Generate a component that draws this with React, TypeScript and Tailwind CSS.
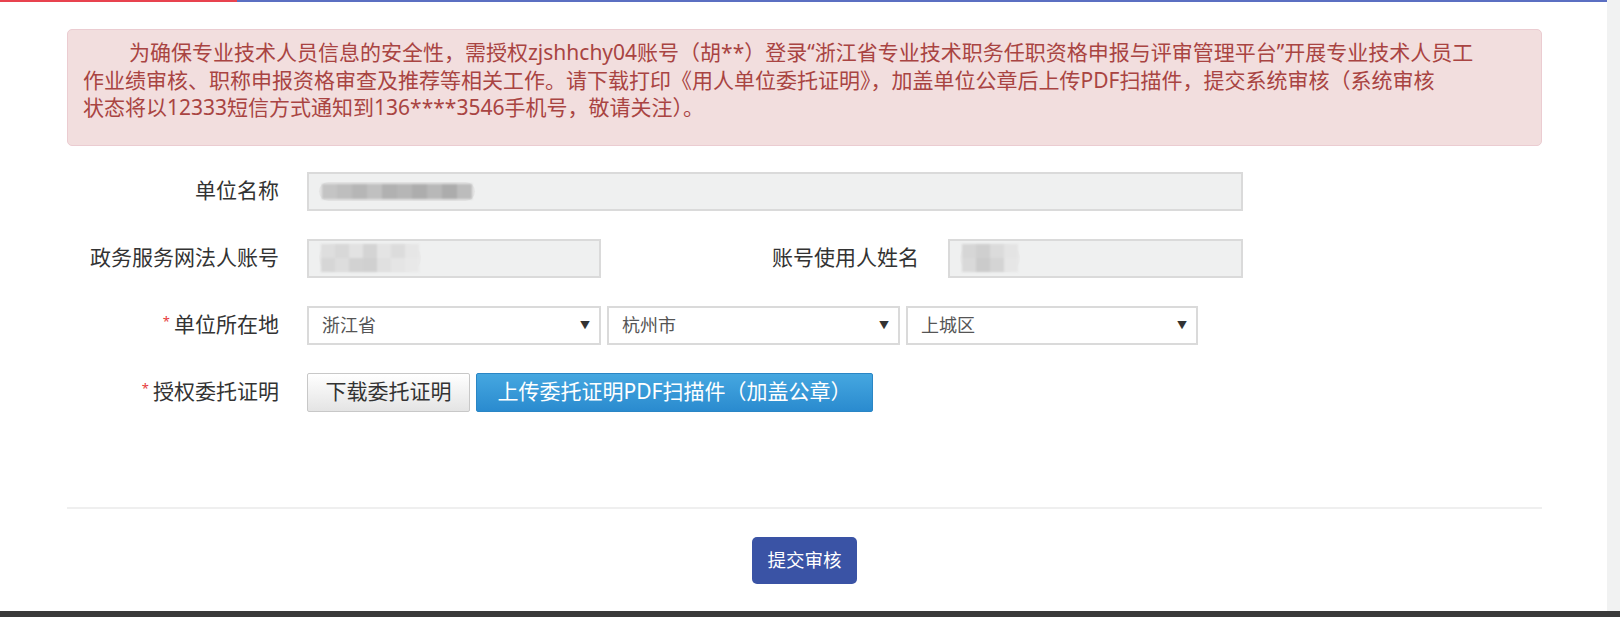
const mosaic = (cells: string[][], cell: number) => (
  <div className="flex flex-col blur-[1.2px]">
    {cells.map((row, i) => (
      <div key={i} className="flex">
        {row.map((c, j) => (
          <div key={j} style={{ width: cell, height: cell, background: c }} />
        ))}
      </div>
    ))}
  </div>
);

function Label({ children, required }: { children: React.ReactNode; required?: boolean }) {
  return (
    <div className="flex w-[212px] shrink-0 items-center justify-end text-[21px] text-[#333]">
      {required && <span className="mr-[4px] self-start pt-[6px] text-[13px] leading-none text-[#e63b3b]">*</span>}
      {children}
    </div>
  );
}

function ReadOnly({ width, children }: { width: number; children?: React.ReactNode }) {
  return (
    <div
      className="flex h-[39px] shrink-0 items-center border-2 border-[#dadada] bg-[#eff0f0] pl-[10px]"
      style={{ width }}
    >
      {children}
    </div>
  );
}

function Select({ value, width }: { value: string; width: number }) {
  return (
    <div
      className="flex h-[39px] shrink-0 items-center justify-between border-2 border-[#dadada] bg-white pl-[13px] pr-[9px]"
      style={{ width }}
    >
      <span className="text-[18px] text-[#555]">{value}</span>
      <span className="text-[10px] text-[#333]">▼</span>
    </div>
  );
}

export default function App() {
  return (
    <div className="flex h-[617px] w-full flex-col overflow-hidden bg-white font-['Noto_Sans','Noto_Sans_CJK_SC',sans-serif]">
      <div className="flex min-h-0 flex-1">
        <main className="flex flex-1 flex-col">
          {/* top bar */}
          <div className="flex h-[2px] shrink-0">
            <div className="w-[237px] bg-[#e8434f]" />
            <div className="flex-1 bg-[#5b6fc2]" />
          </div>

          <div className="flex flex-col pl-[67px] pr-[65px] pt-[27px]">
            {/* notice */}
            <div className="rounded-[5px] border border-[#ebccd1] bg-[#f2dede] pb-[23px] pl-[15px] pt-[9px] text-[21px] leading-[27.5px] text-[#a94442]">
              <p className="whitespace-nowrap indent-[46px]">
                为确保专业技术人员信息的安全性，需授权zjshhchy04账号（胡**）登录“浙江省专业技术职务任职资格申报与评审管理平台”开展专业技术人员工
                <br />
                作业绩审核、职称申报资格审查及推荐等相关工作。请下载打印《用人单位委托证明》，加盖单位公章后上传PDF扫描件，提交系统审核（系统审核
                <br />
                状态将以12333短信方式通知到136****3546手机号，敬请关注）。
              </p>
            </div>

            {/* form */}
            <div className="mt-[26px] flex flex-col gap-[28px]">
              <div className="flex items-center gap-[28px]">
                <Label>单位名称</Label>
                <ReadOnly width={936}>
                  <div className="rounded-full bg-[#e4e4e4] px-[3px] py-[2px]">
                    {mosaic(
                      [["#c4c4c4", "#bebebe", "#b6b6b6", "#c0c0c0", "#b1b1b1", "#b6b6b6", "#adadad", "#b8b8b8", "#acacac", "#bcbcbc"]],
                      15,
                    )}
                  </div>
                </ReadOnly>
              </div>

              <div className="flex items-center">
                <Label>政务服务网法人账号</Label>
                <div className="ml-[28px]">
                  <ReadOnly width={294}>
                    <div className="rounded-full bg-[#ebebeb] px-[2px]">
                      {mosaic(
                        [
                          ["#dedede", "#d8d8d8", "#e2e2e2", "#d4d4d4", "#e4e4e4", "#dcdcdc", "#e6e6e6"],
                          ["#d6d6d6", "#dddddd", "#d2d2d2", "#d0d0d0", "#e0e0e0", "#e5e5e5", "#e8e8e8"],
                        ],
                        14,
                      )}
                    </div>
                  </ReadOnly>
                </div>
                <div className="flex w-[318px] shrink-0 justify-end text-[21px] text-[#333]">账号使用人姓名</div>
                <div className="ml-[29px]">
                  <ReadOnly width={295}>
                    <div className="rounded-full bg-[#ebebeb] px-[2px]">
                      {mosaic(
                        [
                          ["#d6d6d6", "#cfcfcf", "#dbdbdb", "#e4e4e4"],
                          ["#d9d9d9", "#cbcbcb", "#d4d4d4", "#e6e6e6"],
                        ],
                        14,
                      )}
                    </div>
                  </ReadOnly>
                </div>
              </div>

              <div className="flex items-center">
                <Label required>单位所在地</Label>
                <div className="ml-[28px] flex gap-[6px]">
                  <Select value="浙江省" width={294} />
                  <Select value="杭州市" width={293} />
                  <Select value="上城区" width={292} />
                </div>
              </div>

              <div className="flex items-center">
                <Label required>授权委托证明</Label>
                <div className="ml-[28px] flex gap-[6px]">
                  <button className="h-[39px] w-[163px] rounded-[2px] border border-[#c8c8c8] bg-linear-to-b from-white to-[#e4e4e4] text-[21px] text-[#333]">
                    下载委托证明
                  </button>
                  <button className="h-[39px] w-[397px] rounded-[2px] border border-[#2a86c5] bg-linear-to-b from-[#45a7e0] to-[#2a8bcf] text-[21px] text-white">
                    上传委托证明PDF扫描件（加盖公章）
                  </button>
                </div>
              </div>
            </div>

            <div className="mt-[95px] h-[2px] bg-[#efefef]" />

            <div className="mt-[28px] flex justify-center">
              <button className="h-[47px] w-[105px] rounded-[5px] bg-[#3a53a5] text-[18.5px] text-white">提交审核</button>
            </div>
          </div>
        </main>
        <div className="w-[13px] shrink-0 bg-[#f1f2f2]" />
      </div>
      <div className="h-[6px] shrink-0 bg-[#3a3a3a]" />
    </div>
  );
}
